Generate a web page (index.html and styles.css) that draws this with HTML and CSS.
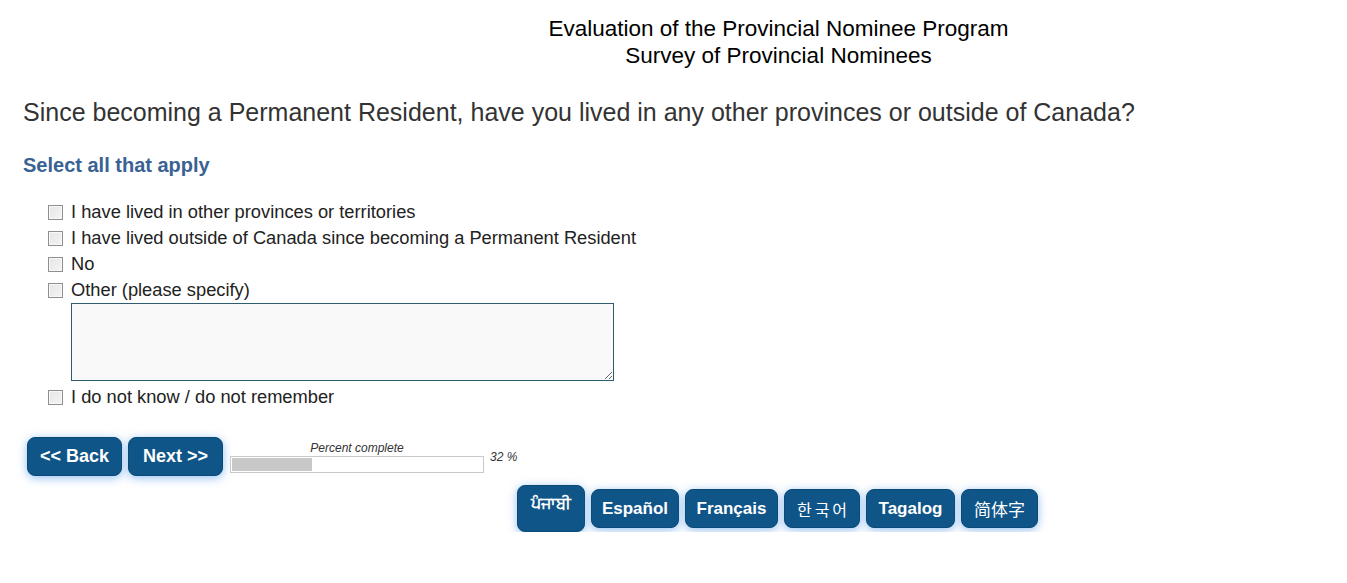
FILE: index.html
```html
<!DOCTYPE html>
<html>
<head>
<meta charset="utf-8">
<link rel="stylesheet" href="styles.css">
</head>
<body>
<div class="page">
  <header class="header">
    <div>Evaluation of the Provincial Nominee Program</div>
    <div>Survey of Provincial Nominees</div>
  </header>
  <h1 class="question">Since becoming a Permanent Resident, have you lived in any other provinces or outside of Canada?</h1>
  <h2 class="instruction">Select all that apply</h2>
  <div class="options">
    <label class="option"><span class="box"></span>I have lived in other provinces or territories</label>
    <label class="option"><span class="box"></span>I have lived outside of Canada since becoming a Permanent Resident</label>
    <label class="option"><span class="box"></span>No</label>
    <label class="option"><span class="box"></span>Other (please specify)</label>
    <div class="specify"><textarea class="textarea"></textarea></div>
    <label class="option"><span class="box"></span>I do not know / do not remember</label>
  </div>
  <div class="nav">
    <button class="btn">&lt;&lt; Back</button>
    <button class="btn">Next &gt;&gt;</button>
    <div class="progress">
      <div class="progress-label">Percent complete</div>
      <div class="bar"><div class="fill" style="width:32%"></div></div>
    </div>
    <div class="pct">32 %</div>
  </div>
  <div class="langs">
    <button class="btn lang active">ਪੰਜਾਬੀ</button>
    <button class="btn lang es">Español</button>
    <button class="btn lang fr">Français</button>
    <button class="btn lang korean">한국어</button>
    <button class="btn lang tl">Tagalog</button>
    <button class="btn lang chinese">简体字</button>
  </div>
</div>
</body>
</html>
```
FILE: styles.css
```css
* { box-sizing: border-box; }
body {
  margin: 0;
  font-family: "Liberation Sans", Arial, sans-serif;
  background: #fff;
  color: #222;
}
.page { padding: 0 0 0 23px; }
.header {
  padding: 15px 0 0 187px;
  text-align: center;
  font-size: 22.5px;
  line-height: 27px;
  color: #000;
}
.question {
  margin: 28px 0 0 0;
  font-size: 25px;
  font-weight: normal;
  line-height: 30px;
  color: #333;
}
.instruction {
  margin: 25px 0 0 0;
  font-size: 20px;
  line-height: 26px;
  font-weight: bold;
  color: #3a6193;
}
.options {
  margin: 21px 0 0 25px;
  display: flex;
  flex-direction: column;
}
.option {
  display: flex;
  align-items: center;
  height: 26px;
  font-size: 18.3px;
  color: #222;
}
.box {
  width: 15px;
  height: 15px;
  border: 1px solid #8f8f8f;
  background: linear-gradient(135deg, #e6e6e6, #f4f4f4);
  margin-right: 8px;
  box-shadow: inset 0 0 0 1px #f8f8f8;
}
.specify { padding: 0 0 3px 23px; }
.textarea {
  display: block;
  width: 543px;
  height: 78px;
  border: 1px solid #2f5d6e;
  background: #f9f9f9;
  resize: both;
  margin: 0;
}
.nav {
  margin-top: 27px;
  display: flex;
  align-items: flex-start;
  margin-left: 4px;
}
.btn {
  font-family: "Liberation Sans", Arial, sans-serif;
  font-weight: bold;
  font-size: 18px;
  color: #fff;
  background: #0f5588;
  border: 1px solid #0b4a78;
  border-radius: 8px;
  height: 39px;
  padding: 0 12px;
  white-space: nowrap;
  box-shadow: 0 2px 10px rgba(60, 140, 230, 0.55);
  cursor: pointer;
}
.nav .btn { width: 95px; padding: 0; margin-right: 6px; }
.progress {
  margin-left: 1px;
  width: 254px;
  display: flex;
  flex-direction: column;
  align-items: center;
}
.progress-label {
  font-size: 12px;
  font-style: italic;
  color: #333;
  line-height: 16px;
  margin-top: 3px;
}
.bar {
  width: 254px;
  height: 17px;
  border: 1px solid #c8c8c8;
  background: #fff;
  padding: 1px;
}
.fill { height: 100%; background: #c8c8c8; }
.pct {
  font-size: 12px;
  font-style: italic;
  color: #333;
  margin: 13px 0 0 6px;
}
.langs {
  display: flex;
  align-items: center;
  gap: 6px;
  margin: 9px 0 0 494px;
}
.lang { height: 39px; padding: 0; font-size: 17px; }
.lang.es { width: 88px; }
.lang.fr { width: 93px; }
.lang.tl { width: 89px; }
.lang.korean {
  font-family: "Noto Sans CJK KR", sans-serif;
  font-weight: normal;
  font-size: 16px;
  letter-spacing: 3px;
  width: 76px;
  padding: 0 0 0 3px;
}
.lang.chinese {
  font-family: "Noto Sans CJK SC", sans-serif;
  font-weight: normal;
  font-size: 17px;
  width: 77px;
}
.lang.active {
  height: 47px;
  width: 68px;
  padding: 0 0 12px;
  font-family: "Noto Sans", "Liberation Sans", sans-serif;
  font-size: 16px;
}
```
